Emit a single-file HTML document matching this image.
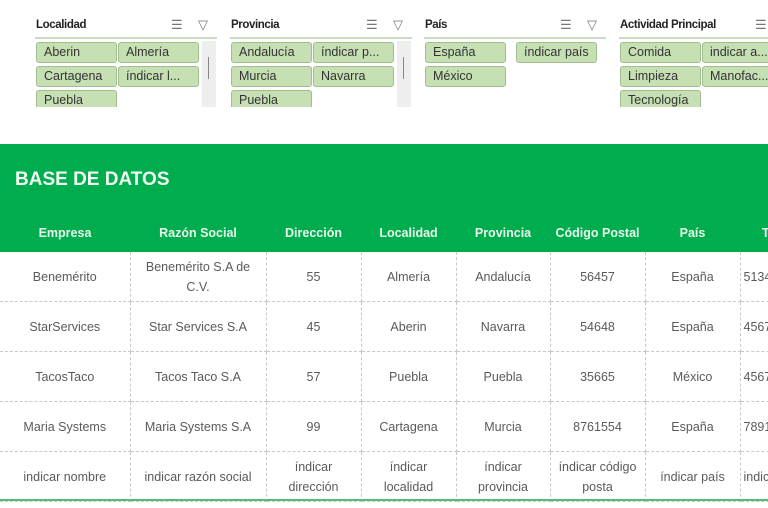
<!DOCTYPE html>
<html><head><meta charset="utf-8"><style>
body{margin:0;width:768px;height:508px;overflow:hidden;background:#fff;font-family:"Liberation Sans",sans-serif;position:relative}
.sl{position:absolute;top:0;width:182px;height:108px}
.sl .t{position:absolute;left:1px;top:19px;font-size:11.5px;font-weight:bold;color:#222;letter-spacing:-0.4px}
.sl .ln{position:absolute;left:0;top:37px;width:182px;height:2px;background:#c9dcc3}
.b{position:absolute;height:19px;background:#c6e0b4;border:1px solid #9fbf8e;border-radius:3px;font-size:12.5px;color:#333;line-height:19px;padding-left:7px;box-sizing:content-box;width:72px;white-space:nowrap;overflow:hidden}
.clip{position:absolute;left:0;top:41px;width:182px;height:66px;overflow:hidden}
.sb{position:absolute;left:167px;top:41px;width:14px;height:66px;background:#eee}
.sb i{position:absolute;left:6px;top:16px;width:1px;height:22px;background:#888}
.ic{position:absolute;top:17px;font-size:13px;color:#777}
.green{position:absolute;left:0;top:144px;width:768px;height:108px;background:#00ad4e}
.ttl{position:absolute;left:15px;top:169px;font-size:19px;font-weight:bold;color:#f2fff4}
.wrap{position:absolute;left:0;top:214px;width:768px;height:294px;overflow:hidden}
table{border-collapse:collapse;table-layout:fixed;width:835px}
th{height:38px;color:#e8f7ea;font-size:12.5px;font-weight:bold;text-align:center;padding:0}
td{height:49px;border:1px dashed #c8c8c8;color:#5a5a5a;font-size:12.5px;text-align:center;line-height:20px;padding:0 3px;white-space:normal}
tr td:first-child{border-left:none}
tbody tr:first-child td{border-top:none}
.bot{position:absolute;left:0;top:499px;width:768px;height:2px;background:#4cc07a}
</style></head><body>

<div class="sl" style="left:35px">
<div class="t">Localidad</div><div class="ic" style="left:136px">☰</div><div class="ic" style="left:163px">▽</div><div class="ln"></div>
<div class="clip">
<div class="b" style="left:1px;top:1px">Aberin</div><div class="b" style="left:83px;top:1px">Almería</div>
<div class="b" style="left:1px;top:25px">Cartagena</div><div class="b" style="left:83px;top:25px">índicar l...</div>
<div class="b" style="left:1px;top:49px">Puebla</div></div>
<div class="sb"><i></i></div></div>

<div class="sl" style="left:230px">
<div class="t">Provincia</div><div class="ic" style="left:136px">☰</div><div class="ic" style="left:163px">▽</div><div class="ln"></div>
<div class="clip">
<div class="b" style="left:1px;top:1px">Andalucía</div><div class="b" style="left:83px;top:1px">índicar p...</div>
<div class="b" style="left:1px;top:25px">Murcia</div><div class="b" style="left:83px;top:25px">Navarra</div>
<div class="b" style="left:1px;top:49px">Puebla</div></div>
<div class="sb"><i></i></div></div>

<div class="sl" style="left:424px">
<div class="t">País</div><div class="ic" style="left:136px">☰</div><div class="ic" style="left:163px">▽</div><div class="ln"></div>
<div class="clip">
<div class="b" style="left:1px;top:1px">España</div><div class="b" style="left:92px;top:1px">índicar país</div>
<div class="b" style="left:1px;top:25px">México</div></div></div>

<div class="sl" style="left:619px">
<div class="t">Actividad Principal</div><div class="ic" style="left:136px">☰</div><div class="ln"></div>
<div class="clip">
<div class="b" style="left:1px;top:1px">Comida</div><div class="b" style="left:83px;top:1px">indicar a...</div>
<div class="b" style="left:1px;top:25px">Limpieza</div><div class="b" style="left:83px;top:25px">Manofac...</div>
<div class="b" style="left:1px;top:49px">Tecnología</div></div></div>

<div class="green"></div>
<div class="ttl">BASE DE DATOS</div>
<div class="wrap">
<table>
<colgroup><col style="width:130px"><col style="width:136px"><col style="width:95px"><col style="width:95px"><col style="width:94px"><col style="width:95px"><col style="width:95px"><col style="width:95px"></colgroup>
<thead><tr><th>Empresa</th><th>Razón Social</th><th>Dirección</th><th>Localidad</th><th>Provincia</th><th>Código Postal</th><th>País</th><th>Teléfono</th></tr></thead>
<tbody>
<tr><td>Benemérito</td><td>Benemérito S.A de C.V.</td><td>55</td><td>Almería</td><td>Andalucía</td><td>56457</td><td>España</td><td style="text-align:left">513456789</td></tr>
<tr><td>StarServices</td><td>Star Services S.A</td><td>45</td><td>Aberin</td><td>Navarra</td><td>54648</td><td>España</td><td style="text-align:left">456789123</td></tr>
<tr><td>TacosTaco</td><td>Tacos Taco S.A</td><td>57</td><td>Puebla</td><td>Puebla</td><td>35665</td><td>México</td><td style="text-align:left">456789123</td></tr>
<tr><td>Maria Systems</td><td>Maria Systems S.A</td><td>99</td><td>Cartagena</td><td>Murcia</td><td>8761554</td><td>España</td><td style="text-align:left">789123456</td></tr>
<tr><td>indicar nombre</td><td>indicar razón social</td><td>índicar dirección</td><td>índicar localidad</td><td>índicar provincia</td><td>índicar código posta</td><td>índicar país</td><td style="text-align:left">indicar</td></tr>
</tbody></table>
</div>
<div class="bot"></div>
</body></html>
